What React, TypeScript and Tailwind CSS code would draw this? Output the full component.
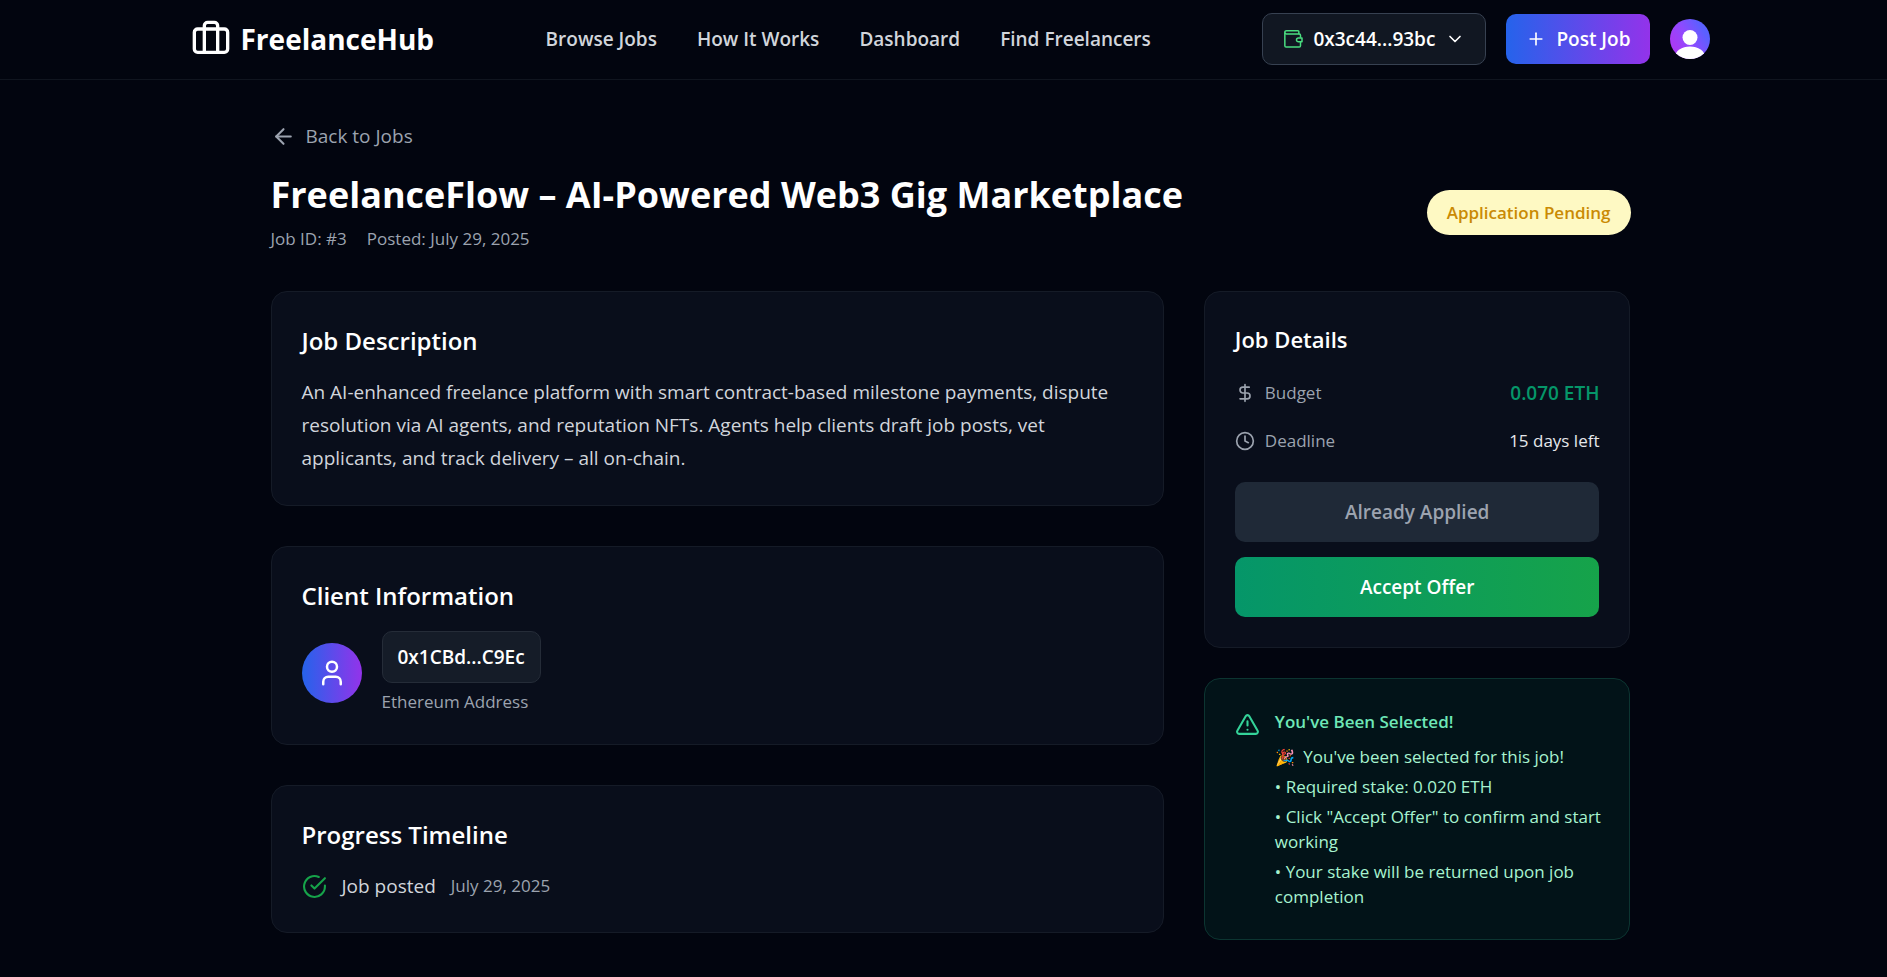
import { ArrowLeft, ChevronDown, Clock, DollarSign, Plus, TriangleAlert, User } from "lucide-react";
import type { ReactNode } from "react";

const navLinks = ["Browse Jobs", "How It Works", "Dashboard", "Find Freelancers"];

const offerNotes = [
  "• Required stake: 0.020 ETH",
  '• Click "Accept Offer" to confirm and start working',
  "• Your stake will be returned upon job completion",
];

function BriefcaseLogo() {
  return (
    <svg viewBox="0 0 24 24" className="size-10" fill="none" stroke="currentColor" strokeWidth="2" strokeLinecap="round" strokeLinejoin="round" aria-hidden="true">
      <rect x="2" y="6" width="20" height="14" rx="2" />
      <path d="M16 20V4a2 2 0 0 0-2-2h-4a2 2 0 0 0-2 2v16" />
    </svg>
  );
}

function WalletIcon() {
  return (
    <svg viewBox="0 0 24 24" className="size-5 text-[#4ade80]" fill="none" stroke="currentColor" strokeWidth="1.8" strokeLinejoin="round" aria-hidden="true">
      <path d="M2.200 4.300v-.300a2 2 0 0 1 2-2H18a1 1 0 0 1 1 1v3H4.200a2 2 0 0 1-2-1.700z" />
      <path d="M2.200 4.300V20a1.500 1.500 0 0 0 1.500 1.500H19.500a1.500 1.500 0 0 0 1.500-1.500v-4.500M19 6h.500A1.500 1.500 0 0 1 21 7.500v3" />
      <path d="M22.800 10.800h-4.300a2.300 2.300 0 0 0 0 4.600h4.300z" />
    </svg>
  );
}

function Avatar() {
  return (
    <svg viewBox="0 0 40 40" className="size-10" aria-hidden="true">
      <defs>
        <linearGradient id="avatar" x1="0.1" y1="0.6" x2="0.8" y2="0.2">
          <stop offset="0" stopColor="#a63cf5" />
          <stop offset="0.45" stopColor="#8f4aff" />
          <stop offset="1" stopColor="#5a60ff" />
        </linearGradient>
        <clipPath id="avatar-clip"><circle cx="20" cy="20" r="20" /></clipPath>
      </defs>
      <g clipPath="url(#avatar-clip)">
        <rect width="40" height="40" fill="url(#avatar)" />
        <circle cx="20" cy="18.500" r="7.500" fill="#fff" />
        <ellipse cx="20" cy="38" rx="15" ry="10.500" fill="#fff" />
      </g>
    </svg>
  );
}

function Card({ title, children }: { title: string; children: ReactNode }) {
  return (
    <section className="rounded-2xl border border-[#151b27] bg-[#090e1b] p-[30px]">
      <h2 className="mb-4 text-2xl leading-[38px] font-semibold">{title}</h2>
      {children}
    </section>
  );
}

export default function App() {
  return (
    <div className="min-h-screen bg-[#02050f] font-['Open_Sans',sans-serif] text-[19px] leading-8 text-white">
      <header className="border-b border-[#10151f] pl-[14px]">
        <div className="mx-auto flex h-[79px] max-w-[1520px] items-center justify-between pb-0.5">
          <a href="#" className="flex items-center gap-2.5 text-[28px] font-bold">
            <BriefcaseLogo />
            FreelanceHub
          </a>
          <nav className="flex gap-10 font-semibold text-[#d1d5db]">
            {navLinks.map((label) => (
              <a key={label} href="#">{label}</a>
            ))}
          </nav>
          <div className="flex items-center gap-5">
            <button className="flex h-[52px] items-center gap-2.5 rounded-[10px] border border-[#374151] bg-[#111722] px-5 font-semibold">
              <WalletIcon />
              0x3c44...93bc
              <ChevronDown className="size-5" />
            </button>
            <button className="flex h-[50px] items-center gap-2.5 rounded-[10px] bg-linear-to-r/srgb from-[#2563eb] to-[#9333ea] px-5 font-semibold">
              <Plus className="size-5" />
              Post Job
            </button>
            <button aria-label="Account"><Avatar /></button>
          </div>
        </div>
      </header>

      <main className="pl-[14px]">
        <div className="mx-auto max-w-[1360px] pt-10 pb-9">
          <div className="mb-10 flex items-end justify-between">
            <div>
              <a href="#" className="mb-5 flex items-center gap-2.5 text-[#9ca3af]">
                <ArrowLeft className="size-[25px]" />
                Back to Jobs
              </a>
              <h1 className="text-4xl leading-[46px] font-bold">FreelanceFlow – AI-Powered Web3 Gig Marketplace</h1>
              <div className="mt-2 flex gap-5 text-[17px] leading-[25px] text-[#9ca3af]">
                <span>Job ID: #3</span>
                <span>Posted: July 29, 2025</span>
              </div>
            </div>
            <span className="mb-4 rounded-full bg-[#fef9c3] px-5 py-2.5 text-[17px] leading-[25px] font-semibold text-[#ca8a04]">
              Application Pending
            </span>
          </div>

          <div className="grid grid-cols-3 items-start gap-10">
            <div className="col-span-2 flex flex-col gap-10">
              <Card title="Job Description">
                <p className="leading-[33px] text-[#d1d5db]">
                  An AI-enhanced freelance platform with smart contract-based milestone payments, dispute resolution via AI agents, and reputation NFTs. Agents help clients draft job posts, vet applicants, and track delivery – all on-chain.
                </p>
              </Card>
              <Card title="Client Information">
                <div className="flex items-center gap-5">
                  <div className="flex size-[60px] items-center justify-center rounded-full bg-linear-to-r/srgb from-[#2563eb] to-[#9333ea]">
                    <User className="size-[30px]" />
                  </div>
                  <div>
                    <div className="rounded-[10px] border border-[#252c38] bg-[#151c28] px-[15px] py-[9px] font-semibold">0x1CBd...C9Ec</div>
                    <p className="mt-1.5 text-[17px] leading-[25px] text-[#9ca3af]">Ethereum Address</p>
                  </div>
                </div>
              </Card>
              <Card title="Progress Timeline">
                <div className="flex items-center gap-[15px]">
                  <svg viewBox="0 0 24 24" className="size-[25px] text-[#16a34a]" fill="none" stroke="currentColor" strokeWidth="2" strokeLinecap="round" strokeLinejoin="round" aria-hidden="true">
                    <path d="M22 11.080V12a10 10 0 1 1-5.930-9.140" />
                    <path d="m9 11 3 3L22 4" />
                  </svg>
                  <span className="text-[#d1d5db]">Job posted</span>
                  <span className="text-[17px] text-[#9ca3af]">July 29, 2025</span>
                </div>
              </Card>
            </div>

            <aside className="flex flex-col gap-[30px]">
              <section className="rounded-2xl border border-[#151b27] bg-[#090e1b] p-[30px]">
                <h2 className="mb-5 text-[22px] leading-[35px] font-semibold">Job Details</h2>
                <div className="flex flex-col gap-4">
                  <div className="flex items-center justify-between">
                    <span className="flex items-center gap-2.5 text-[17px] text-[#9ca3af]"><DollarSign className="size-5" />Budget</span>
                    <span className="font-semibold text-[#059669]">0.070 ETH</span>
                  </div>
                  <div className="flex items-center justify-between text-[17px]">
                    <span className="flex items-center gap-2.5 text-[#9ca3af]"><Clock className="size-5" />Deadline</span>
                    <span className="text-[#e5e7eb]">15 days left</span>
                  </div>
                </div>
                <div className="mt-[25px] flex flex-col gap-[15px] font-semibold">
                  <button disabled className="h-[60px] rounded-[10px] bg-[#1f2937] text-[#9ca3af]">Already Applied</button>
                  <button className="h-[60px] rounded-[10px] bg-linear-to-r/srgb from-[#059669] to-[#16a34a]">Accept Offer</button>
                </div>
              </section>

              <section className="flex gap-[15px] rounded-2xl border border-[#0c3531] bg-[#021318] py-[30px] pr-5 pl-[30px] text-[17px] leading-[25px] text-[#a7f3d0]">
                <TriangleAlert className="mt-[3px] size-[25px] shrink-0 text-[#34d399]" />
                <div>
                  <h3 className="mb-2.5 font-semibold text-[#6ee7b7]">You've Been Selected!</h3>
                  <div className="flex flex-col gap-[5px]">
                    <p><span className="mr-1 text-base">🎉</span> You've been selected for this job!</p>
                    {offerNotes.map((note) => (
                      <p key={note}>{note}</p>
                    ))}
                  </div>
                </div>
              </section>
            </aside>
          </div>
        </div>
      </main>
    </div>
  );
}
